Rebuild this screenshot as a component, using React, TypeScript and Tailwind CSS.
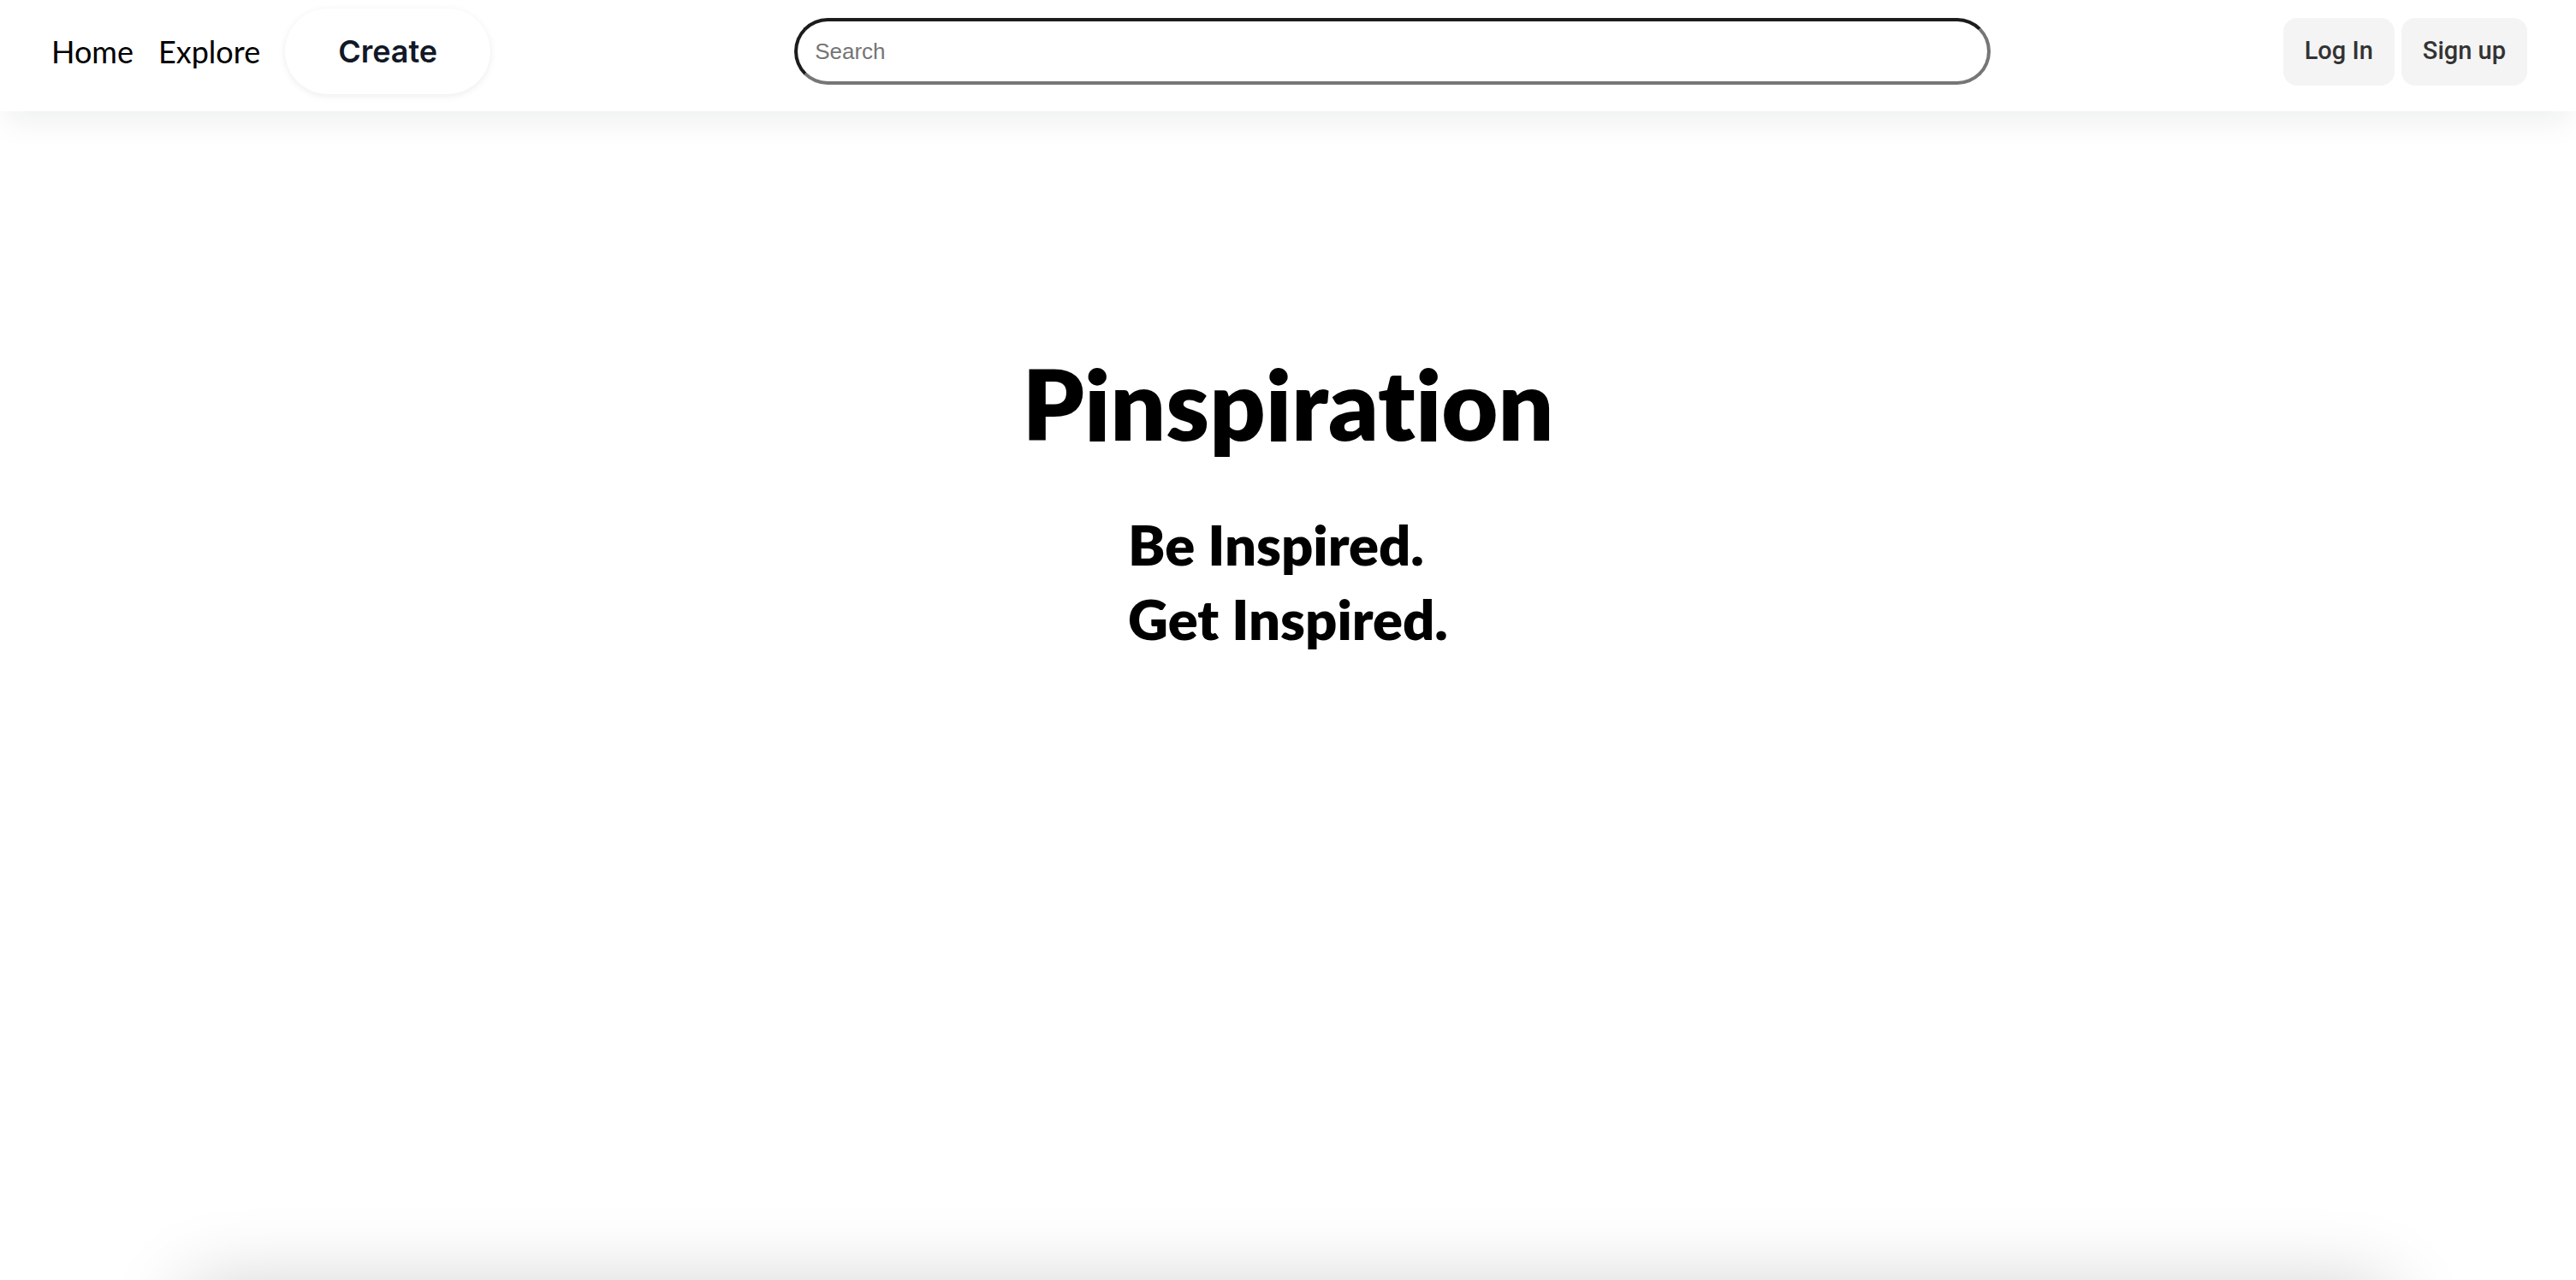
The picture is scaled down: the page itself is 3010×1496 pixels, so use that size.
export default function App() {
  return (
    <div className="relative h-screen overflow-hidden bg-white">
      <header className="relative z-10 flex h-[130px] items-center bg-white pb-[10px] shadow-[0_20px_34px_-8px_rgba(15,23,42,0.07)]">
        <nav className="flex items-center gap-[29px] pl-[60px]">
          <a className="font-['Lato',sans-serif] text-[36px] leading-none text-black">Home</a>
          <a className="font-['Lato',sans-serif] text-[36px] leading-none text-black">Explore</a>
          <button className="h-[100px] w-[240px] rounded-full bg-white font-['Inter',sans-serif] text-[36px] font-semibold text-[#111827] shadow-[0_2px_8px_rgba(15,23,42,0.08)]">
            Create
          </button>
        </nav>
        <input
          placeholder="Search"
          className="ml-[355px] h-[78px] w-[1398px] rounded-full border-4 border-t-[#1c1c1c] border-l-[#1c1c1c] border-r-[#767676] border-b-[#767676] bg-white px-[20px] font-['Liberation_Sans',Arial,sans-serif] text-[26px] text-black outline-none placeholder:text-[#757575]"
        />
        <div className="ml-auto flex items-center gap-[8px] pr-[57px]">
          <button className="h-[79px] rounded-[16px] bg-[#f4f4f4] px-[25px] font-['Roboto',sans-serif] text-[29px] font-medium text-[#333333]">
            Log In
          </button>
          <button className="h-[79px] rounded-[16px] bg-[#f4f4f4] px-[25px] font-['Roboto',sans-serif] text-[29px] font-medium text-[#333333]">
            Sign up
          </button>
        </div>
      </header>

      <main>
        <section className="flex h-[1370px] flex-col items-center pt-[284px]">
          <h1 className="font-['Lato',sans-serif] text-[114px] font-extrabold leading-none text-black [font-variant-ligatures:none]">
            Pinspiration
          </h1>
          <div className="mt-[65px] text-left font-['Lato',sans-serif] text-[65px] font-extrabold leading-[87px] text-black [font-variant-ligatures:none]">
            <div>Be Inspired.</div>
            <div>Get Inspired.</div>
          </div>
        </section>
        <section className="mx-[215px] h-[800px] rounded-[32px] bg-white shadow-[0_0_90px_rgba(0,0,0,0.18)]" />
      </main>
    </div>
  );
}
